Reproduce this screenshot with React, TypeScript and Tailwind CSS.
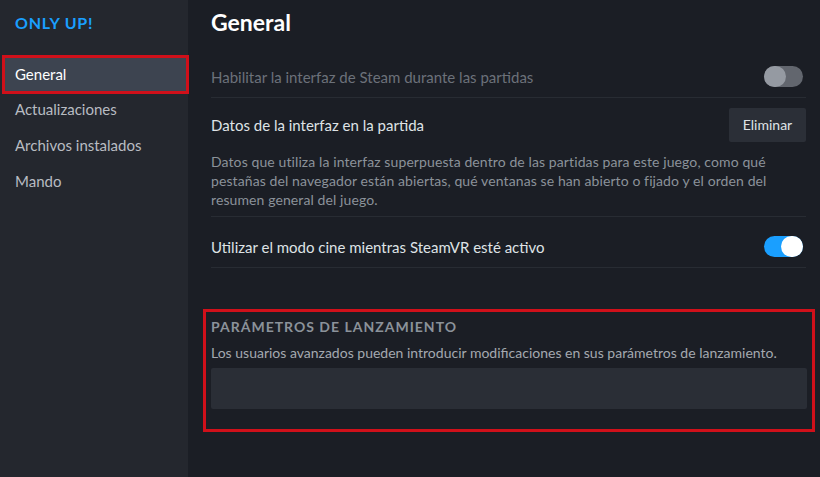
import React from "react";

const Toggle = ({ on }: { on: boolean }) => (
  <div
    className={`flex h-[21px] w-[39px] items-center rounded-full ${
      on ? "justify-end bg-[#1a9fff]" : "justify-start bg-[#62666e]"
    }`}
  >
    <div
      className={`h-[21px] w-[22px] rounded-full ${
        on ? "bg-white" : "bg-[#959aa2]"
      }`}
    />
  </div>
);

const Divider = () => <div className="h-px bg-[#282c33]" />;

export default function App() {
  const menu = ["Actualizaciones", "Archivos instalados", "Mando"];

  return (
    <div
      className="flex h-[477px] w-[820px] overflow-hidden bg-[#1b1e25]"
      style={{ fontFamily: "Lato, 'Noto Sans', sans-serif" }}
    >
      <aside className="relative z-10 flex w-[188px] shrink-0 flex-col bg-[#24272e] text-[15px]">
        <div className="h-[35px] pl-[15px] pt-[11px] text-[16px] font-bold leading-[24px] tracking-[0.8px] text-[#1a9fff]">
          ONLY UP!
        </div>
        <div className="mt-[20px] ml-[2px] flex h-[39px] w-[187px] items-center border-[3px] border-[#d0101a] bg-[#3d4450] pl-[10px] text-white">
          General
        </div>
        <div className="-mt-[3px] flex flex-col">
          {menu.map((m) => (
            <div key={m} className="flex h-[36px] items-center pl-[15px] text-[#b8bcc2]">
              {m}
            </div>
          ))}
        </div>
      </aside>

      <main className="flex flex-1 flex-col pl-[23px] pr-[14px] text-[15px] leading-[20px]">
        <h1 className="flex h-[44px] items-center text-[23px] font-bold text-white">General</h1>

        <div className="flex items-center justify-between pb-[10px] pt-[22px]">
          <span className="text-[#6c717a]">
            Habilitar la interfaz de Steam durante las partidas
          </span>
          <div className="mr-[3px]">
            <Toggle on={false} />
          </div>
        </div>
        <Divider />

        <div className="mt-[10px] flex items-center justify-between">
          <span className="text-[#dfe3e6]">Datos de la interfaz en la partida</span>
          <button className="h-[34px] w-[77px] rounded-[2px] bg-[#2b2f37] text-[14px] text-[#dfe3e6]">
            Eliminar
          </button>
        </div>
        <p className="mt-[10px] pb-[7px] text-[14px] leading-[19px] tracking-[0.1px] text-[#8b929a]">
          Datos que utiliza la interfaz superpuesta dentro de las partidas para este juego, como qué
          <br />
          pestañas del navegador están abiertas, qué ventanas se han abierto o fijado y el orden del
          <br />
          resumen general del juego.
        </p>
        <Divider />

        <div className="flex items-center justify-between pb-[10px] pt-[19px]">
          <span className="text-[#dfe3e6]">
            Utilizar el modo cine mientras SteamVR esté activo
          </span>
          <div className="mr-[3px]">
            <Toggle on />
          </div>
        </div>
        <Divider />

        <section className="mt-[41px] -ml-[8px] -mr-[9px] border-[3px] border-[#d0101a] px-[5px] pb-[20px] pt-[5px]">
          <h2 className="text-[14px] font-bold leading-[20px] tracking-[1px] text-[#8b929a]">
            PARÁMETROS DE LANZAMIENTO
          </h2>
          <p className="mt-[6px] text-[14px] leading-[20px] text-[#a4a9b0]">
            Los usuarios avanzados pueden introducir modificaciones en sus parámetros de lanzamiento.
          </p>
          <div className="mt-[5px] h-[41px] rounded-[2px] bg-[#2a2e36]" />
        </section>
      </main>
    </div>
  );
}
